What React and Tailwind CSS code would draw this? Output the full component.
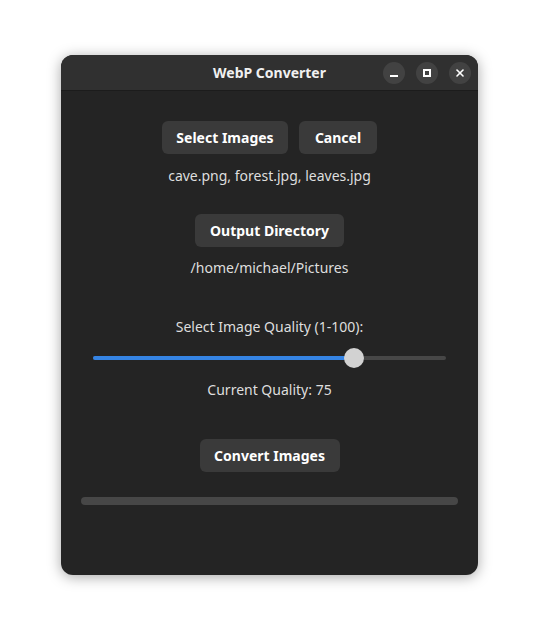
import { X } from 'lucide-react'

const FONT = { fontFamily: '"Noto Sans", "Open Sans", sans-serif' }

function Btn({ children, className = '' }) {
  return (
    <button className={`flex h-[33px] items-center justify-center whitespace-nowrap rounded-[6px] bg-[#3a3a3a] text-[14px] font-bold text-white ${className}`}>
      {children}
    </button>
  )
}

export default function App() {
  const quality = 75
  return (
    <div className="min-h-[642px] w-[539px] bg-white pl-[61px] pt-[55px]" style={FONT}>
      <div className="flex h-[520px] w-[417px] flex-col overflow-hidden rounded-[12px] bg-[#242424] shadow-[0_2px_14px_rgba(0,0,0,0.35)]">
        {/* header bar */}
        <div className="relative flex h-[36px] shrink-0 items-center justify-center border-b border-[#1c1c1c] bg-[#303030]">
          <span className="text-[14px] font-bold text-[#f0f0f0]">WebP Converter</span>
          <div className="absolute right-[7px] top-[7px] flex gap-[11px]">
            <span className="flex h-[22px] w-[22px] items-center justify-center rounded-full bg-[#424242]">
              <span className="mt-[5px] h-[2px] w-[8px] bg-white" />
            </span>
            <span className="flex h-[22px] w-[22px] items-center justify-center rounded-full bg-[#424242]">
              <span className="h-[8px] w-[8px] border-2 border-white" />
            </span>
            <span className="flex h-[22px] w-[22px] items-center justify-center rounded-full bg-[#424242]">
              <X size={12} strokeWidth={3.2} className="text-white" />
            </span>
          </div>
        </div>

        <div className="flex flex-col items-center whitespace-nowrap text-[14px] text-[#dedede]">
          <div className="mt-[30px] flex gap-[11px]">
            <Btn className="w-[126px]">Select Images</Btn>
            <Btn className="w-[78px]">Cancel</Btn>
          </div>
          <p className="mt-[12px] leading-[20px]">cave.png, forest.jpg, leaves.jpg</p>

          <Btn className="mt-[28px] w-[149px]">Output Directory</Btn>
          <p className="mt-[11px] leading-[20px]">/home/michael/Pictures</p>

          <p className="mt-[39px] leading-[20px]">Select Image Quality (1-100):</p>
          <div className="relative ml-[32px] mt-[11px] flex h-[20px] w-[353px] items-center self-start">
            <div className="h-[4px] w-full rounded-full bg-[#474747]" />
            <div className="absolute left-0 h-[4px] rounded-full bg-[#3584e4]" style={{ width: '74%' }} />
            <div className="absolute top-0 h-[20px] w-[20px] rounded-full bg-[#d2d2d2]" style={{ left: 'calc(74% - 10px)' }} />
          </div>
          <p className="mt-[12px] leading-[20px]">Current Quality: {quality}</p>

          <Btn className="mt-[39px] w-[140px]">Convert Images</Btn>

          <div className="mt-[25px] h-[8px] w-[377px] rounded-full bg-[#474747]" />
        </div>
      </div>
    </div>
  )
}
